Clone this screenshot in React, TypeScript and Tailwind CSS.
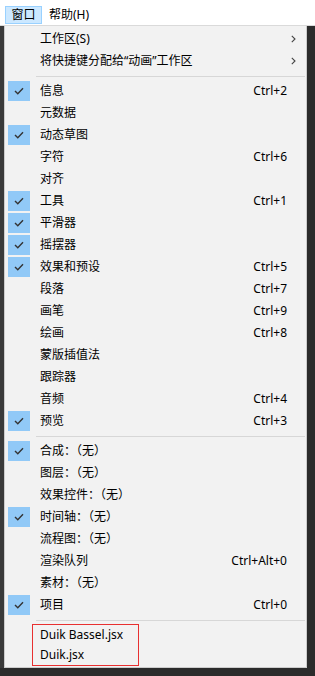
import React from 'react';

type Item =
  | { kind: 'sep' }
  | { kind: 'item'; label: string; shortcut?: string; checked?: boolean; sub?: boolean };

const items: Item[] = [
  { kind: 'item', label: '工作区(S)', sub: true },
  { kind: 'item', label: '将快捷键分配给“动画”工作区', sub: true },
  { kind: 'sep' },
  { kind: 'item', label: '信息', shortcut: 'Ctrl+2', checked: true },
  { kind: 'item', label: '元数据' },
  { kind: 'item', label: '动态草图', checked: true },
  { kind: 'item', label: '字符', shortcut: 'Ctrl+6' },
  { kind: 'item', label: '对齐' },
  { kind: 'item', label: '工具', shortcut: 'Ctrl+1', checked: true },
  { kind: 'item', label: '平滑器', checked: true },
  { kind: 'item', label: '摇摆器', checked: true },
  { kind: 'item', label: '效果和预设', shortcut: 'Ctrl+5', checked: true },
  { kind: 'item', label: '段落', shortcut: 'Ctrl+7' },
  { kind: 'item', label: '画笔', shortcut: 'Ctrl+9' },
  { kind: 'item', label: '绘画', shortcut: 'Ctrl+8' },
  { kind: 'item', label: '蒙版插值法' },
  { kind: 'item', label: '跟踪器' },
  { kind: 'item', label: '音频', shortcut: 'Ctrl+4' },
  { kind: 'item', label: '预览', shortcut: 'Ctrl+3', checked: true },
  { kind: 'sep' },
  { kind: 'item', label: '合成：（无）', checked: true },
  { kind: 'item', label: '图层：（无）' },
  { kind: 'item', label: '效果控件：（无）' },
  { kind: 'item', label: '时间轴：（无）', checked: true },
  { kind: 'item', label: '流程图：（无）' },
  { kind: 'item', label: '渲染队列', shortcut: 'Ctrl+Alt+0' },
  { kind: 'item', label: '素材：（无）' },
  { kind: 'item', label: '项目', shortcut: 'Ctrl+0', checked: true },
];

const Check = () => (
  <svg width="10" height="8" viewBox="0 0 10 8" fill="none">
    <path d="M1 4 L3.8 6.8 L9 1.2" stroke="#333" strokeWidth="1.4" />
  </svg>
);

const Chevron = () => (
  <svg width="5" height="8" viewBox="0 0 5 8" fill="none">
    <path d="M0.8 0.8 L4 4 L0.8 7.2" stroke="#444" strokeWidth="1.1" />
  </svg>
);

const Separator = () => (
  <div className="h-[8px] flex items-center pl-[31px] pr-[1px]">
    <div className="h-px w-full bg-[#d7d7d7]" />
  </div>
);

const Row: React.FC<{ item: Extract<Item, { kind: 'item' }> }> = ({ item }) => (
  <div className="flex items-center h-[22px]">
    <div className="w-[22px] h-[20px] ml-[3px] mr-[10px] flex items-center justify-center">
      {item.checked && (
        <div className="w-[22px] h-[20px] bg-[#91c9f7] flex items-center justify-center">
          <Check />
        </div>
      )}
    </div>
    <span className="flex-1 text-black whitespace-nowrap">{item.label}</span>
    {item.shortcut && <span className="text-black mr-[19px]">{item.shortcut}</span>}
    {item.sub && (
      <span className="mr-[10px] flex items-center">
        <Chevron />
      </span>
    )}
  </div>
);

export default function App() {
  return (
    <div
      className="w-[315px] h-[676px] bg-[#2b2b2b] overflow-hidden text-[12px] leading-none"
      style={{ fontFamily: '"Noto Sans", "Noto Sans CJK SC", sans-serif' }}
    >
      <div className="h-[26px] bg-white flex items-end border-b border-[#dadada]">
        <div className="ml-[5px] mb-[1px] h-[18px] w-[37px] bg-[#cce8ff] border border-[#99d1ff] flex items-center justify-center text-black">
          窗口
        </div>
        <div className="ml-[7px] mb-[1px] h-[18px] flex items-center text-black">帮助(H)</div>
      </div>
      <div className="flex">
        <div className="w-[4px] bg-[#3a3a3a]" />
        <div className="w-[303px] bg-[#f2f2f2] border border-t-0 border-[#cccccc] pt-[2px] pb-[1px]">
          {items.map((it, i) =>
            it.kind === 'sep' ? <Separator key={i} /> : <Row key={i} item={it} />
          )}
          <Separator />
          <div className="ml-[27px] w-[107px] border border-[#e83030]">
            <div className="h-[20px] flex items-center pl-[7px] text-black">Duik Bassel.jsx</div>
            <div className="h-[20px] flex items-center pl-[7px] text-black">Duik.jsx</div>
          </div>
        </div>
      </div>
    </div>
  );
}
